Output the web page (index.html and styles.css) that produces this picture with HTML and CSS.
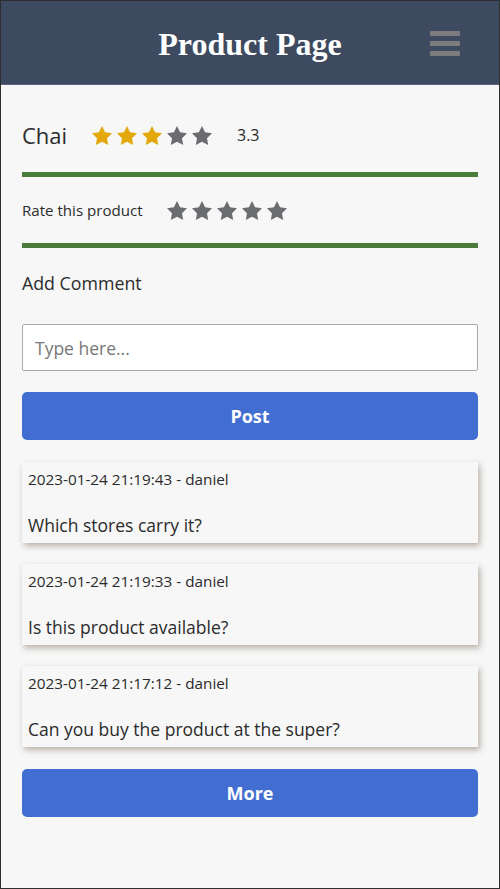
FILE: index.html
```html
<!DOCTYPE html>
<html lang="en">
<head>
<meta charset="utf-8">
<title>Product Page</title>
<link rel="stylesheet" href="styles.css">
</head>
<body>
<div class="screen">
  <header class="topbar">
    <div></div>
    <h1 class="title">Product Page</h1>
    <div class="menu" aria-label="menu">
      <span></span><span></span><span></span>
    </div>
  </header>

  <main class="content">
    <div class="product-row">
      <span class="product-name">Chai</span>
      <div class="stars">
        <svg class="star gold" viewBox="2 2 20 19.02"><polygon points="12,2 15.09,8.26 22,9.27 17,14.14 18.18,21.02 12,17.77 5.82,21.02 7,14.14 2,9.27 8.91,8.26"/></svg>
        <svg class="star gold" viewBox="2 2 20 19.02"><polygon points="12,2 15.09,8.26 22,9.27 17,14.14 18.18,21.02 12,17.77 5.82,21.02 7,14.14 2,9.27 8.91,8.26"/></svg>
        <svg class="star gold" viewBox="2 2 20 19.02"><polygon points="12,2 15.09,8.26 22,9.27 17,14.14 18.18,21.02 12,17.77 5.82,21.02 7,14.14 2,9.27 8.91,8.26"/></svg>
        <svg class="star" viewBox="2 2 20 19.02"><polygon points="12,2 15.09,8.26 22,9.27 17,14.14 18.18,21.02 12,17.77 5.82,21.02 7,14.14 2,9.27 8.91,8.26"/></svg>
        <svg class="star" viewBox="2 2 20 19.02"><polygon points="12,2 15.09,8.26 22,9.27 17,14.14 18.18,21.02 12,17.77 5.82,21.02 7,14.14 2,9.27 8.91,8.26"/></svg>
      </div>
      <span class="rating">3.3</span>
    </div>

    <hr class="divider">

    <div class="rate-row">
      <span class="rate-label">Rate this product</span>
      <div class="stars">
        <svg class="star" viewBox="2 2 20 19.02"><polygon points="12,2 15.09,8.26 22,9.27 17,14.14 18.18,21.02 12,17.77 5.82,21.02 7,14.14 2,9.27 8.91,8.26"/></svg>
        <svg class="star" viewBox="2 2 20 19.02"><polygon points="12,2 15.09,8.26 22,9.27 17,14.14 18.18,21.02 12,17.77 5.82,21.02 7,14.14 2,9.27 8.91,8.26"/></svg>
        <svg class="star" viewBox="2 2 20 19.02"><polygon points="12,2 15.09,8.26 22,9.27 17,14.14 18.18,21.02 12,17.77 5.82,21.02 7,14.14 2,9.27 8.91,8.26"/></svg>
        <svg class="star" viewBox="2 2 20 19.02"><polygon points="12,2 15.09,8.26 22,9.27 17,14.14 18.18,21.02 12,17.77 5.82,21.02 7,14.14 2,9.27 8.91,8.26"/></svg>
        <svg class="star" viewBox="2 2 20 19.02"><polygon points="12,2 15.09,8.26 22,9.27 17,14.14 18.18,21.02 12,17.77 5.82,21.02 7,14.14 2,9.27 8.91,8.26"/></svg>
      </div>
    </div>

    <hr class="divider">

    <div class="add-label">Add Comment</div>

    <input class="comment-input" type="text" placeholder="Type here...">

    <button class="btn">Post</button>

    <div class="comments">
      <div class="card">
        <div class="meta">2023-01-24 21:19:43 - daniel</div>
        <div class="text">Which stores carry it?</div>
      </div>
      <div class="card">
        <div class="meta">2023-01-24 21:19:33 - daniel</div>
        <div class="text">Is this product available?</div>
      </div>
      <div class="card">
        <div class="meta">2023-01-24 21:17:12 - daniel</div>
        <div class="text">Can you buy the product at the super?</div>
      </div>
    </div>

    <button class="btn">More</button>
  </main>
</div>
</body>
</html>
```

FILE: styles.css
```css
* { box-sizing: border-box; }

html, body {
  margin: 0;
  padding: 0;
}

body {
  font-family: "Open Sans", "Noto Sans", sans-serif;
  color: #2b2b2b;
}

.screen {
  width: 500px;
  height: 889px;
  border: 1px solid #2e2e2e;
  background: #f7f7f7;
  display: flex;
  flex-direction: column;
}

.topbar {
  height: 84px;
  background: #3d4a60;
  display: grid;
  grid-template-columns: 1fr auto 1fr;
  align-items: center;
  border-bottom: 1px solid #59627a;
}

.title {
  margin: 0;
  font-family: "Liberation Serif", serif;
  font-weight: bold;
  font-size: 32px;
  color: #ffffff;
  line-height: 1;
  padding-top: 3px;
}

.menu {
  justify-self: end;
  margin-right: 39px;
  width: 30px;
  display: flex;
  flex-direction: column;
  gap: 5px;
  padding-top: 2px;
}

.menu span {
  display: block;
  height: 5px;
  background: #7c7c7e;
  border-radius: 1px;
}

.content {
  padding: 0 21px 0 21px;
  display: flex;
  flex-direction: column;
}

.product-row {
  display: flex;
  align-items: center;
  height: 50px;
  margin-top: 25px;
}

.product-name {
  font-size: 22px;
  width: 70px;
  color: #2b2b2b;
}

.stars {
  display: flex;
  gap: 5px;
}

.star {
  width: 20px;
  height: 19px;
  fill: #6b6c70;
  display: block;
}

.star.gold {
  fill: #e2a80c;
}

.rating {
  margin-left: 25px;
  font-size: 16px;
}

.divider {
  border: none;
  height: 5px;
  background: #4a7c3c;
  margin: 12px 0 0 0;
}

.rate-row {
  display: flex;
  align-items: center;
  height: 66px;
}

.rate-label {
  font-size: 15.1px;
  width: 145px;
}

.rate-row + .divider {
  margin-top: 0;
}

.add-label {
  font-size: 17.8px;
  margin-top: 23px;
  line-height: 24px;
}

.comment-input {
  margin-top: 29px;
  height: 47px;
  width: 100%;
  border: 1px solid #a8a8a8;
  border-radius: 2px;
  background: #ffffff;
  font-family: inherit;
  font-size: 17.5px;
  padding: 0 12px;
  color: #333;
}

.comment-input::placeholder {
  color: #777;
}

.btn {
  width: 100%;
  height: 48px;
  margin-top: 21px;
  border: none;
  border-radius: 5px;
  background: #436ed1;
  color: #ffffff;
  font-family: inherit;
  font-weight: bold;
  font-size: 18px;
}

.comments {
  display: flex;
  flex-direction: column;
  gap: 21px;
  margin-top: 22px;
}

.comments + .btn {
  margin-top: 22px;
}

.card {
  height: 81px;
  background: #f7f7f7;
  box-shadow: 2px 3px 6px rgba(110, 90, 70, 0.45);
  padding: 6px 6px 5px 6px;
  display: flex;
  flex-direction: column;
  justify-content: space-between;
}

.meta {
  font-size: 15.3px;
  line-height: 22px;
}

.text {
  font-size: 17.5px;
  line-height: 26px;
}
```
